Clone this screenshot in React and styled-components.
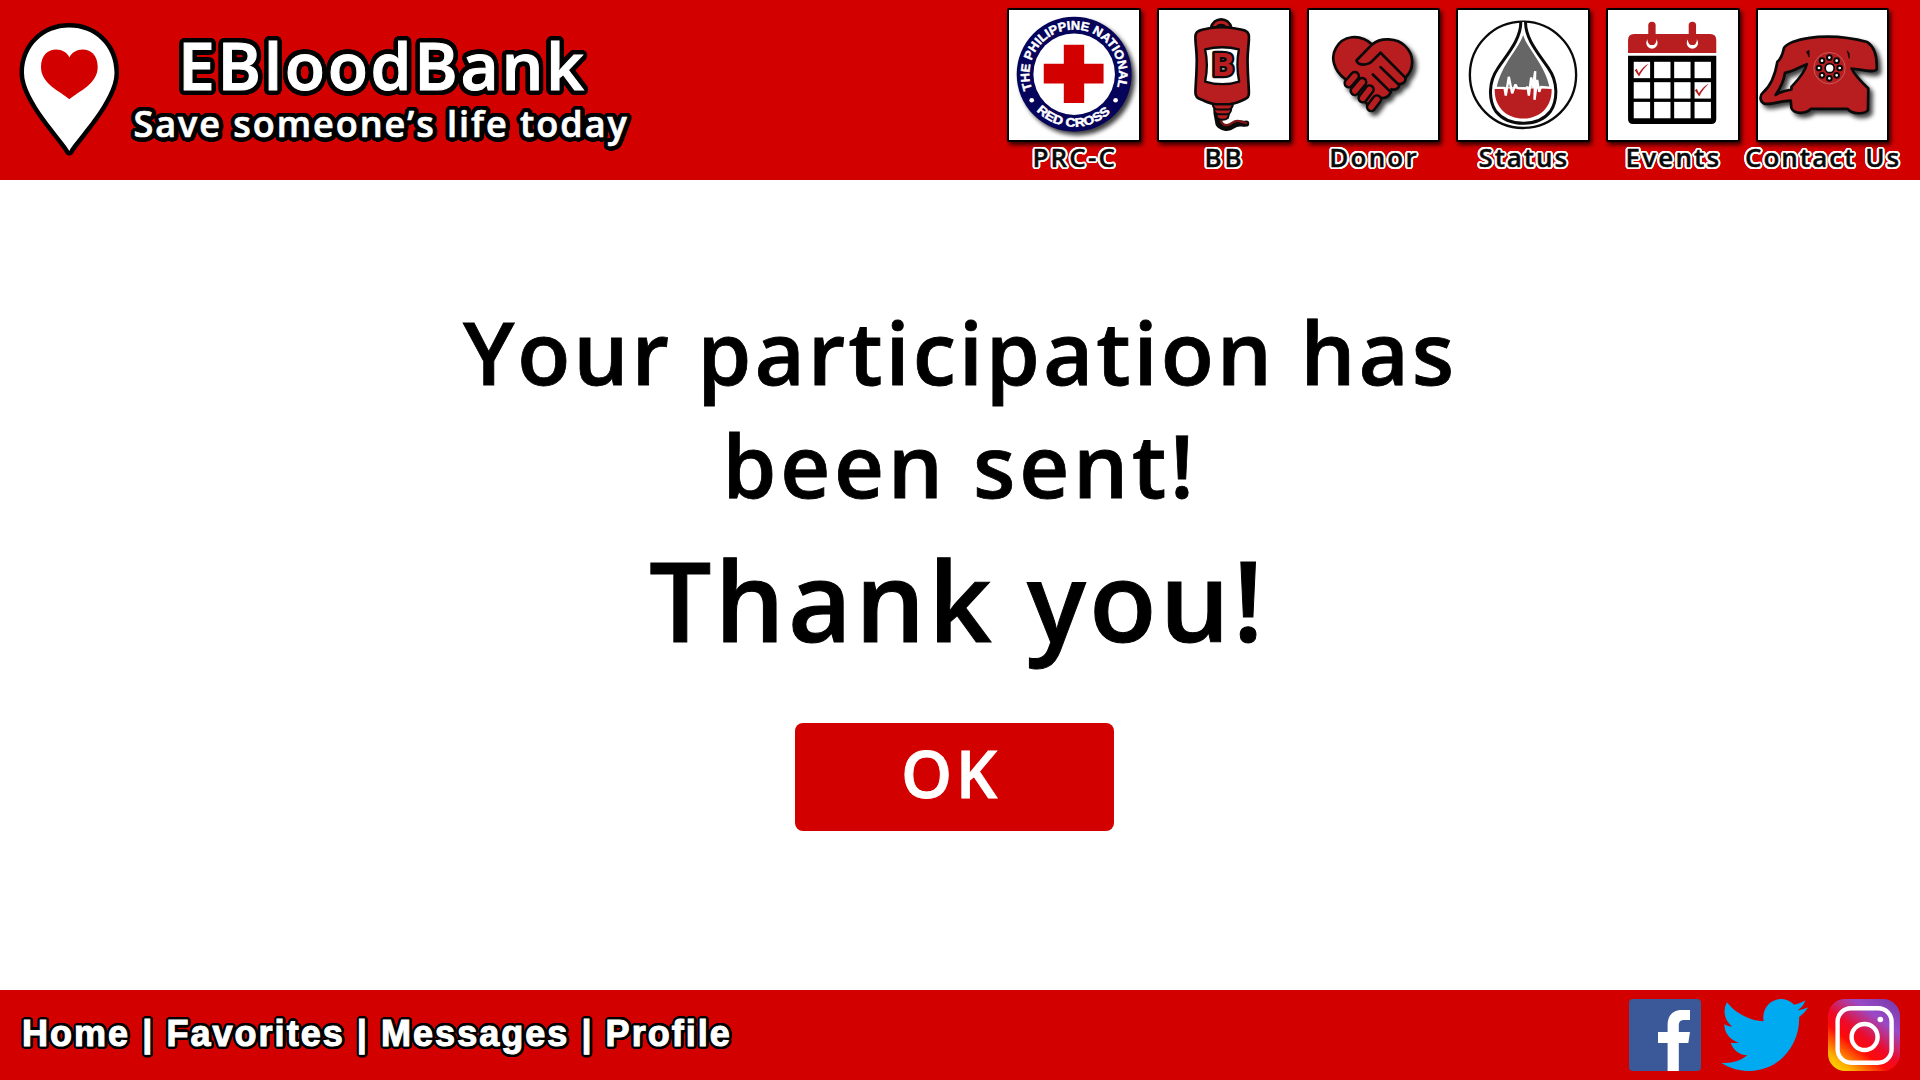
import React from "react";
import styled, { createGlobalStyle } from "styled-components";

const RED = "#d30000";
const ICON_RED = "#b81d1f";

/* A round, even contour made of offset copies of the text. */
const contour = (radius, color) =>
  Array.from({ length: 32 }, (_, i) => {
    const a = (i / 32) * Math.PI * 2;
    return `${(Math.cos(a) * radius).toFixed(2)}px ${(Math.sin(a) * radius).toFixed(2)}px 0 ${color}`;
  }).join(", ");

const GlobalStyle = createGlobalStyle`
  *, *::before, *::after { box-sizing: border-box; }
  body { margin: 0; background: #fff; font-family: "Open Sans", "Noto Sans", sans-serif; font-weight: 600; }
`;

const Page = styled.div`
  display: flex;
  flex-direction: column;
  width: 1920px;
  height: 1080px;
  overflow: hidden;
`;

const Header = styled.header`
  display: flex;
  justify-content: space-between;
  flex: none;
  height: 180px;
  padding: 8px 30.6px 0 18px;
  background: ${RED};
`;

const Brand = styled.div`
  display: flex;
`;

const PinIcon = styled.svg`
  width: 102px;
  height: 136px;
  margin: 12.5px 13.5px 0 0;
  overflow: visible;
`;

const BrandText = styled.div`
  padding-top: 23.4px;
  color: #fff;
  white-space: nowrap;
`;

const BrandName = styled.div`
  margin-left: 44.5px;
  font-size: 66px;
  line-height: 66px;
  letter-spacing: 2.65px;
  -webkit-text-stroke: 1px #fff;
  text-shadow: ${contour(2.6, "#000")}, ${contour(5, "#000")};
`;

const Tagline = styled.div`
  margin-top: 7px;
  font-size: 36px;
  line-height: 40px;
  letter-spacing: 1.97px;
  -webkit-text-stroke: 0.7px #fff;
  text-shadow: ${contour(2.3, "#000")}, ${contour(4.5, "#000")};
`;

const Nav = styled.nav`
  display: flex;
  gap: 16px;
`;

const NavItem = styled.div`
  display: flex;
  flex-direction: column;
  align-items: center;
  width: 133.67px;
`;

const Tile = styled.div`
  width: 100%;
  height: 133.67px;
  border: 2px solid #000;
  border-radius: 2px;
  background: #fff;
  box-shadow: 2px 3px 4px rgba(0, 0, 0, 0.75);
`;

const TileIcon = styled.svg`
  display: block;
  width: 100%;
  height: 100%;
  overflow: visible;
`;

const CastShadow = styled.g`
  filter: drop-shadow(10px 11px 7px rgba(0, 0, 0, 0.75));
`;

const NavLabel = styled.div`
  margin-top: 3.6px;
  padding-left: 1px;
  color: #0a0a0a;
  font-size: 26px;
  line-height: 24px;
  letter-spacing: ${(p) => p.$spacing}px;
  white-space: nowrap;
  -webkit-text-stroke: 0.4px #0a0a0a;
  text-shadow: ${contour(1, "#fff")}, ${contour(2, "#fff")};
`;

const Main = styled.main`
  display: flex;
  flex: 1;
  flex-direction: column;
  align-items: center;
  padding-top: 114.5px;
  color: #000;
  text-align: center;
`;

const Message = styled.div`
  font-size: 87px;
  line-height: 113.5px;
  letter-spacing: ${(p) => p.$spacing}px;
  -webkit-text-stroke: 0.8px #000;
`;

const Thanks = styled.div`
  margin: 12.5px 4px 0 0;
  font-size: 110px;
  line-height: 130px;
  letter-spacing: 3.4px;
  -webkit-text-stroke: 1px #000;
`;

const OkButton = styled.button`
  width: 319px;
  height: 108px;
  margin: 59px 11px 0 0;
  padding: 0 7px 8px 0;
  border: 0;
  border-radius: 8px;
  background: ${RED};
  color: #fff;
  font: 600 65px "Open Sans", "Noto Sans", sans-serif;
  letter-spacing: 3.8px;
  -webkit-text-stroke: 0.8px #fff;
`;

const Footer = styled.footer`
  display: flex;
  align-items: center;
  justify-content: space-between;
  flex: none;
  height: 90px;
  padding: 0 20px 0 22px;
  background: ${RED};
`;

const FooterLinks = styled.div`
  padding-bottom: 3px;
  color: #fff;
  font: bold 36px "Liberation Sans", Arial, sans-serif;
  letter-spacing: 2.04px;
  white-space: pre;
  -webkit-text-stroke: 1.1px #fff;
  text-shadow: ${contour(1.5, "#000")}, ${contour(2.9, "#000")};
`;

const Social = styled.div`
  display: flex;
  gap: 20px;
`;

const SocialIcon = styled.svg`
  width: ${(p) => p.$w}px;
  height: 72px;
`;

function Pin() {
  return (
    <PinIcon viewBox="18 21 102 136">
      <path
        d="M69.3 151 C64 140 24 100 24 73 C24 46 44 27.5 69.3 27.5 C94.5 27.5 114.5 46 114.5 73 C114.5 100 75 140 69.3 151Z"
        fill="#fff"
        stroke="#000"
        strokeWidth="9"
        strokeLinejoin="round"
        style={{ paintOrder: "stroke" }}
      />
      <path
        d="M69.4 57.5 C74 46 97.7 45 97.7 67 C97.7 84 79 91 69.4 99.2 C60 91 41 84 41 67 C41 45 65 46 69.4 57.5Z"
        fill={RED}
      />
    </PinIcon>
  );
}

function RedCrossIcon() {
  return (
    <TileIcon viewBox="28 31 388 388">
      <defs>
        <path id="arc-top" d="M97 269 A134 134 0 1 1 349 269" />
        <path id="arc-bottom" d="M110 333 A158 158 0 0 0 336 333" />
      </defs>
      <CastShadow>
        <circle cx="223" cy="223" r="172" fill="#06035a" />
      </CastShadow>
      <circle cx="223" cy="223" r="122" fill="#fff" />
      <path d="M192 135H253V192H311V251H253V309H192V251H132V192H192Z" fill={RED} />
      <g fill="#fff" stroke="#fff" strokeWidth="1.4" fontFamily="Liberation Sans, Arial, sans-serif" fontWeight="700" fontSize="37">
        <text textLength="506" lengthAdjust="spacingAndGlyphs">
          <textPath href="#arc-top" textLength="506" lengthAdjust="spacingAndGlyphs">THE PHILIPPINE NATIONAL</textPath>
        </text>
        <text textLength="246" lengthAdjust="spacingAndGlyphs">
          <textPath href="#arc-bottom" textLength="246" lengthAdjust="spacingAndGlyphs">RED CROSS</textPath>
        </text>
      </g>
      <circle cx="96" cy="301" r="7" fill="#fff" />
      <circle cx="347" cy="301" r="7" fill="#fff" />
    </TileIcon>
  );
}

function BloodBagIcon() {
  return (
    <TileIcon viewBox="478 31 388 388">
      <g stroke="#0a0a0a" strokeWidth="8" strokeLinejoin="round" strokeLinecap="round" fill={ICON_RED}>
        <path d="M633 86 C640 50 688 50 695 86" />
        <path d="M650 81 C656 73 672 73 678 81Z" strokeWidth="5" />
        <path d="M650 340 L656 372 C664 384 685 388 698 378 C712 365 722 372 739 371" fill="none" strokeWidth="18" />
        <path d="M660 352 L666 368 C674 380 688 376 698 368 C712 357 722 366 739 369" fill="none" stroke="#7d1517" strokeWidth="7" />
        <path d="M649 340 H688 L684 354 C676 361 658 361 652 354Z" strokeWidth="6" />
        <path d="M643 327 H694 C694 336 688 343 680 343 H658 C649 343 643 337 643 327Z" strokeWidth="6" />
        <path d="M639 308 H699 C700 320 694 329 684 329 H654 C644 329 638 320 639 308Z" strokeWidth="6" />
        <path d="M633 85 C618 88 607 89 598 93 C587 98 586 106 587 120 C588 140 591 155 591 180 C591 220 588 245 587 276 C586 291 594 295 604 299 C622 306 633 312 650 313 H688 C705 312 716 306 733 299 C743 295 748 291 747 276 C746 245 743 220 743 180 C743 155 746 140 747 120 C748 106 747 98 736 93 C727 89 714 88 697 85 C682 81 648 81 633 85Z" />
        <path d="M616 149 C648 141 686 141 717 149 C711 180 711 212 718 245 C686 255 648 255 616 245 C623 212 623 180 616 149Z" fill="#fff" strokeWidth="7" />
      </g>
      <text
        x="635"
        y="230"
        textLength="68"
        lengthAdjust="spacingAndGlyphs"
        fontFamily="Open Sans, Noto Sans, sans-serif"
        fontWeight="700"
        fontSize="98"
        fill={ICON_RED}
        stroke="#0a0a0a"
        strokeWidth="14"
        strokeLinejoin="round"
        style={{ paintOrder: "stroke" }}
      >
        B
      </text>
    </TileIcon>
  );
}

function DonorIcon() {
  const fingers = [
    [191, 229, 173, 250],
    [213, 247, 191, 273],
    [235, 269, 215, 295],
    [257, 299, 240, 321],
  ];
  return (
    <TileIcon viewBox="54 31 388 388">
      <CastShadow>
        <g stroke="#0a0a0a" strokeWidth="8" strokeLinejoin="round" strokeLinecap="round" fill={ICON_RED}>
          <path d="M162 237 C128 212 118 172 134 146 C154 107 206 100 243 134 C268 112 318 114 342 139 C369 165 370 206 343 233 C344 246 335 254 325 252 C325 264 313 272 301 268 C300 284 287 296 273 294 L243 330 L196 276Z" />
          <path d="M243 134 L196 182 C202 199 230 197 243 184 L268 159 L343 234" />
          <path d="M268 202 L322 254" fill="none" />
          <path d="M245 224 L298 276" fill="none" />
        </g>
        <g strokeLinecap="round">
          {fingers.map(([x1, y1, x2, y2]) => (
            <React.Fragment key={x1}>
              <line x1={x1} y1={y1} x2={x2} y2={y2} stroke="#0a0a0a" strokeWidth="32" />
              <line x1={x1} y1={y1} x2={x2} y2={y2} stroke={ICON_RED} strokeWidth="17" />
            </React.Fragment>
          ))}
        </g>
      </CastShadow>
    </TileIcon>
  );
}

function StatusIcon() {
  return (
    <TileIcon viewBox="505 31 388 388">
      <circle cx="699.5" cy="225" r="159" fill="none" stroke="#0a0a0a" strokeWidth="7" />
      <path
        d="M693 67 C693 118 655 160 624 206 C596 246 596 300 618 334 C656 382 745 382 782 334 C804 300 804 246 776 206 C745 160 707 118 707 67Z"
        fill="#fff"
      />
      <path
        d="M693 67 C693 118 655 160 624 206 C596 246 596 300 618 334 C656 382 745 382 782 334 C804 300 804 246 776 206 C745 160 707 118 707 67"
        fill="none"
        stroke="#0a0a0a"
        strokeWidth="9"
      />
      <path d="M700 106 C688 146 636 192 621 262 H779 C764 192 712 146 700 106Z" fill="#666" />
      <path d="M615 266 H785 C788 320 750 356 700 356 C650 356 612 320 615 266Z" fill={ICON_RED} />
      <path
        d="M614 264 H644 L648 287 L657 231 L667 280 L677 254 L683 265 L708 266 L713 261 L717 287 L724 233 L729 262 L736 214 L734 300 L742 240 L748 276 L753 261 L786 264"
        fill="none"
        stroke="#fff"
        strokeWidth="7"
        strokeLinejoin="bevel"
      />
    </TileIcon>
  );
}

function EventsIcon() {
  const columns = [131, 192, 252, 313];
  const rows = [186, 247, 306];
  return (
    <TileIcon viewBox="54 31 388 388">
      <path d="M114 160V121Q114 103 132 103H360Q378 103 378 121V160Z" fill={ICON_RED} />
      <path d="M114 168H378V357Q378 372 363 372H129Q114 372 114 357Z" fill="#000" />
      {rows.map((y) => columns.map((x) => <rect key={`${x}-${y}`} x={x} y={y} width="49" height="49" fill="#fff" />))}
      {[185.5, 306.5].map((x) => (
        <g key={x}>
          <circle cx={x} cy="130" r="17" fill="#fff" />
          <circle cx={x} cy="121" r="13.5" fill={ICON_RED} />
          <rect x={x - 11} y="66" width="22" height="70" rx="11" fill={ICON_RED} />
        </g>
      ))}
      <path d="M134 211 L140 207 L146 220 C154 208 164 197 176 192 C164 203 155 215 147 230Z" fill={ICON_RED} />
      <path d="M314 271 L320 267 L326 280 C334 268 344 257 356 252 C344 263 335 275 327 290Z" fill={ICON_RED} />
    </TileIcon>
  );
}

function PhoneIcon() {
  const holes = Array.from({ length: 8 }, (_, i) => (i * Math.PI) / 4);
  return (
    <TileIcon viewBox="503 31 388 388">
      <CastShadow>
        <path
          fillRule="evenodd"
          d="M580 148 C582 133 625 118 652 115 C700 108 765 109 830 127 C850 140 860 170 858 209 C850 219 820 211 783 206 C792 226 806 240 833 266 L832 331 C822 343 785 344 771 327 H661 C648 342 612 344 603 325 L601 302 C572 303 545 314 523 312 C508 307 507 287 518 278 C545 255 555 222 561 186 C571 178 576 165 580 148Z M584 219 C606 216 628 202 649 193 C645 215 625 238 603 261 L603 269 C590 272 570 275 556 285 C570 265 580 244 584 219Z"
          fill={ICON_RED}
          stroke="#0a0a0a"
          strokeWidth="8"
          strokeLinejoin="round"
        />
      </CastShadow>
      <path d="M648 156 L656 152 L656 172Z M770 153 L776 161 L776 176Z" fill="#0a0a0a" stroke="#0a0a0a" strokeWidth="2" />
      <circle cx="717" cy="205" r="47" fill="none" stroke="#c8686a" strokeWidth="2.5" />
      <circle cx="717.5" cy="205" r="13.5" fill="#fff" stroke="#0a0a0a" strokeWidth="5" />
      {holes.map((a) => (
        <circle
          key={a}
          cx={716.5 + Math.cos(a) * 31}
          cy={204.5 + Math.sin(a) * 31}
          r="7"
          fill="#fff"
          stroke="#0a0a0a"
          strokeWidth="6"
        />
      ))}
    </TileIcon>
  );
}

const navItems = [
  { label: "PRC-C", spacing: 2.14, Icon: RedCrossIcon },
  { label: "BB", spacing: 2.86, Icon: BloodBagIcon },
  { label: "Donor", spacing: 2.2, Icon: DonorIcon },
  { label: "Status", spacing: 1.91, Icon: StatusIcon },
  { label: "Events", spacing: 2.15, Icon: EventsIcon },
  { label: "Contact Us", spacing: 2.0, Icon: PhoneIcon },
];

function Facebook() {
  return (
    <SocialIcon $w={72} viewBox="0 0 72 72">
      <rect width="72" height="72" rx="4" fill="#3b5998" />
      <path d="M38.6 72V44H29V33H38.6V26C38.6 16 44.5 11 53 11H61V21H55.5C51 21 49.8 23 49.8 27V33H61L59.3 44H49.8V72Z" fill="#fff" />
    </SocialIcon>
  );
}

function Twitter() {
  return (
    <SocialIcon $w={87} viewBox="0 2.25 24 19.5" preserveAspectRatio="none">
      <path
        fill="#00aaf0"
        d="M23.953 4.57a10 10 0 01-2.825.775 4.958 4.958 0 002.163-2.723c-.951.555-2.005.959-3.127 1.184a4.92 4.92 0 00-8.384 4.482C7.69 8.095 4.067 6.13 1.64 3.162a4.822 4.822 0 00-.666 2.475c0 1.71.87 3.213 2.188 4.096a4.904 4.904 0 01-2.228-.616v.06a4.923 4.923 0 003.946 4.827 4.996 4.996 0 01-2.212.085 4.936 4.936 0 004.604 3.417 9.867 9.867 0 01-6.102 2.105c-.39 0-.779-.023-1.17-.067a13.995 13.995 0 007.557 2.209c9.053 0 13.998-7.496 13.998-13.985 0-.21 0-.42-.015-.63A9.935 9.935 0 0024 4.59z"
      />
    </SocialIcon>
  );
}

function Instagram() {
  return (
    <SocialIcon $w={72} viewBox="0 0 72 72">
      <defs>
        <linearGradient id="insta" x1="0.1" y1="1" x2="0.85" y2="0">
          <stop offset="0" stopColor="#ffd500" />
          <stop offset="0.12" stopColor="#fdb000" />
          <stop offset="0.36" stopColor="#ff0a08" />
          <stop offset="0.5" stopColor="#ee0a28" />
          <stop offset="0.76" stopColor="#9a4ac8" />
          <stop offset="1" stopColor="#7a3cae" />
        </linearGradient>
      </defs>
      <rect width="72" height="72" rx="17" fill="url(#insta)" />
      <rect x="9.6" y="9.2" width="54" height="54.5" rx="13.5" fill="none" stroke="#fff" strokeWidth="4.4" />
      <circle cx="36.6" cy="38" r="13" fill="none" stroke="#fff" strokeWidth="4.4" />
      <circle cx="52.3" cy="20.5" r="2.8" fill="#fff" />
    </SocialIcon>
  );
}

export default function App() {
  return (
    <Page>
      <GlobalStyle />
      <Header>
        <Brand>
          <Pin />
          <BrandText>
            <BrandName>EBloodBank</BrandName>
            <Tagline>Save someone’s life today</Tagline>
          </BrandText>
        </Brand>
        <Nav>
          {navItems.map(({ label, spacing, Icon }) => (
            <NavItem key={label}>
              <Tile>
                <Icon />
              </Tile>
              <NavLabel $spacing={spacing}>{label}</NavLabel>
            </NavItem>
          ))}
        </Nav>
      </Header>
      <Main>
        <Message $spacing={2.89}>Your participation has</Message>
        <Message $spacing={3.7}>been sent!</Message>
        <Thanks>Thank you!</Thanks>
        <OkButton>OK</OkButton>
      </Main>
      <Footer>
        <FooterLinks>Home | Favorites | Messages | Profile</FooterLinks>
        <Social>
          <Facebook />
          <Twitter />
          <Instagram />
        </Social>
      </Footer>
    </Page>
  );
}
